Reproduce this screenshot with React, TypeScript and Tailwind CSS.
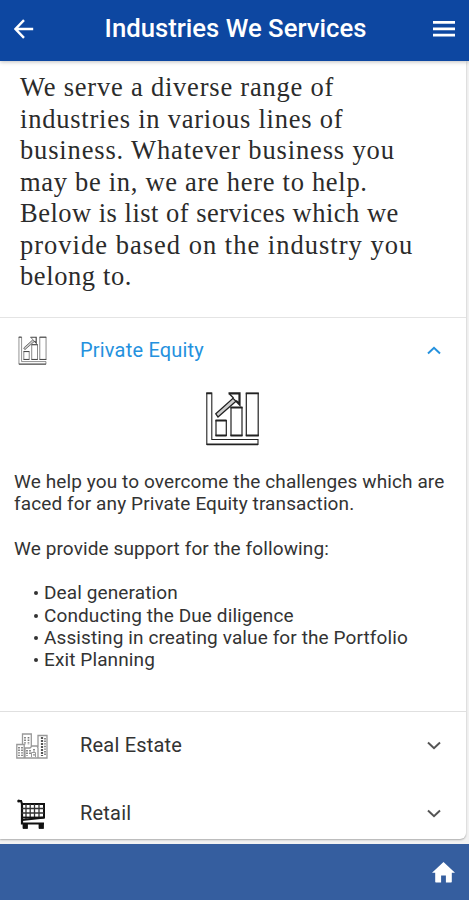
import { ReactNode } from 'react'

const introLines = [
    { text: 'We serve a diverse range of', spacing: 'tracking-[0.79px]' },
    { text: 'industries in various lines of', spacing: 'tracking-[0.77px]' },
    { text: 'business. Whatever business you', spacing: 'tracking-[0.85px]' },
    { text: 'may be in, we are here to help.', spacing: 'tracking-[0.7px]' },
    { text: 'Below is list of services which we', spacing: 'tracking-[0.49px]' },
    { text: 'provide based on the industry you', spacing: 'tracking-[1.01px]' },
    { text: 'belong to.', spacing: 'tracking-[0.6px]' },
];

const supportItems = [
    'Deal generation',
    'Conducting the Due diligence',
    'Assisting in creating value for the Portfolio',
    'Exit Planning',
];

const ChartIcon = ({ className }: { className: string }) => (
    <svg viewBox="0 0 55 55" fill="none" stroke="currentColor" className={className}>
        <path d="M1.8 2h5v46.5H53v5H1.8z" strokeWidth="1.1" />
        <path d="M1.3 2.3h5.5M1.8 53.3H53" strokeWidth="1.8" />
        <path d="M11 29.5h10.3v15H11zM26 16.5h11v28H26zM41.3 2.3h11.9v42.2H41.3z" strokeWidth="1.2" />
        <path d="M10.5 29.5h11M10.5 44.5h11M25.5 16.5h12M25.5 44.5h12M40.8 2.3h13M40.8 44.5h13" strokeWidth="1.8" />
        <path d="M10.8 22.8 28 7.3l3 3L13 26z" fill="#ccc" strokeWidth="1.3" />
        <path d="M23.5 2.3h11v11L31 9.8" strokeWidth="2.2" />
        <path d="m24.5 3 4 4" strokeWidth="1.4" />
    </svg>
);

const BuildingsIcon = () => (
    <svg viewBox="0 0 32 26" fill="none" stroke="#999" className="h-[26px] w-8">
        <path d="M.8 25V11.5h7.4V25zM6.5 11.5V1h8.8v13M22 14V2.5h9V25H.8M9 25V15h5l2-2h5l1 2v10" strokeWidth="1.3" />
        <path d="M3 14v9M6 14v9M9 4v8M12.5 4v8M11 17v6M14 17v4M18 16v7M29 5v18" stroke="#777" strokeWidth="1.7" strokeDasharray="1.4 1.2" />
        <path d="M26 4v19" stroke="#555" strokeWidth="2.2" strokeDasharray="2 1" />
        <path d="M15.5 24v-4.5h4V24" />
    </svg>
);

const CartIcon = () => (
    <svg viewBox="0 0 30 32" fill="none" stroke="#111" className="ml-px h-8 w-[30px]">
        <path d="M1 3h3l1 3v19.5h22" strokeWidth="2.2" />
        <path d="M4.5 6H27v13.5L5 22" strokeWidth="2" />
        <path d="M9 6v15M13.2 6v14.5M17.5 6v14M22 6v13.5M4.5 10.5H27M4.5 15H27" stroke="#333" strokeWidth="1.3" />
        <path d="M6 19.5h21" strokeWidth="1.8" />
        <circle cx="1.8" cy="3" r="1.6" fill="#111" stroke="none" />
        <path d="M6 26h4.5v4.5H6zM22 26h4.5v4.5H22z" fill="#111" strokeWidth=".8" strokeLinejoin="round" />
    </svg>
);

const Chevron = ({ up = false }: { up?: boolean }) => (
    <svg viewBox="0 0 14 9" fill="none" stroke="currentColor" strokeWidth="2" className="h-[9px] w-3.5">
        <path d={up ? 'M1 7.5 7 1.8l6 5.7' : 'M1 1.5l6 5.7 6-5.7'} />
    </svg>
);

interface RowProps {
    icon: ReactNode;
    label: string;
    open?: boolean;
}

const IndustryRow = ({ icon, label, open }: RowProps) => (
    <button className={`flex w-full shrink-0 items-center pr-[25px] pl-4 ${open ? 'h-16 text-[#2491de]' : 'h-[68px] pb-px text-[#333]'}`}>
        <span className="flex w-16 items-center">{icon}</span>
        <span className={`flex-1 text-left text-[20px] leading-6 tracking-[0.2px] ${open ? '' : 'pb-0.5'}`}>{label}</span>
        <span className={open ? '' : 'text-[#555]'}>
            <Chevron up={open} />
        </span>
    </button>
);

const App = () => {
    return (
        <div className="flex h-[900px] w-[469px] flex-col overflow-hidden bg-[#f2f2f2] font-['Roboto',sans-serif]">
            <header className="z-10 flex h-[61px] shrink-0 items-center justify-between bg-[#0d47a1] px-3.5 pb-1 text-white shadow-[0_1px_4px_rgba(0,0,0,0.25)]">
                <svg viewBox="0 0 20 20" fill="none" stroke="currentColor" strokeWidth="2.4" className="h-5 w-5">
                    <path d="M19.2 10H2M10 1.2 1.5 10l8.5 8.8" />
                </svg>
                <h1 className="pb-0.5 pl-1 text-[25.7px] leading-8 font-medium">Industries We Services</h1>
                <svg viewBox="0 0 22 16" fill="currentColor" className="h-4 w-[22px]">
                    <path d="M0 0h22v2.8H0zM0 6.4h22v2.8H0zM0 12.8h22v2.8H0z" />
                </svg>
            </header>

            <main className="mr-[3px] flex h-[778px] shrink-0 flex-col overflow-hidden rounded-br-md bg-white shadow-[0_1px_2px_rgba(0,0,0,0.3)]">
                <section className="h-[257px] shrink-0 border-b border-[#e4e4e4] pt-[11px] pl-5 font-['Liberation_Serif',serif] text-[26.5px] leading-[31.5px] text-[#2b2b2b]">
                    {introLines.map((line) => (
                        <div key={line.text}>
                            <span className={`whitespace-nowrap ${line.spacing}`}>{line.text}</span>
                        </div>
                    ))}
                </section>

                <section className="h-[394px] shrink-0 border-b border-[#e0e0e0]">
                    <IndustryRow open label="Private Equity" icon={<ChartIcon className="ml-0.5 h-[29px] w-[29px] text-[#444]" />} />
                    <ChartIcon className="mt-[9px] ml-[205px] h-[55px] w-[55px] text-[#222]" />
                    <div className="mt-[25px] pl-3.5 text-[19px] leading-[22.25px] tracking-[0.11px] text-[#333]">
                        <p><span className="whitespace-nowrap">We help you to overcome the challenges which are</span></p>
                        <p><span className="whitespace-nowrap">faced for any Private Equity transaction.</span></p>
                        <p className="mt-[22.25px]">We provide support for the following:</p>
                        <ul className="mt-[22.25px] pl-5">
                            {supportItems.map((item) => (
                                <li key={item} className="flex items-center gap-1.5">
                                    <span className="h-1 w-1 rounded-full bg-[#333]" />
                                    <span className="whitespace-nowrap">{item}</span>
                                </li>
                            ))}
                        </ul>
                    </div>
                </section>

                <IndustryRow label="Real Estate" icon={<BuildingsIcon />} />
                <IndustryRow label="Retail" icon={<CartIcon />} />
            </main>

            <footer className="mt-[5px] flex flex-1 items-center justify-end bg-[#355e9f] pr-3.5 text-white">
                <svg viewBox="0 0 23 21" fill="currentColor" className="h-[21px] w-[23px]">
                    <path d="M11.5 0 0 10.8h3.2v9c0 .5.3.7.7.7h5.2v-7h4.8v7h5.2c.4 0 .7-.2.7-.7v-9H23z" />
                </svg>
            </footer>
        </div>
    )
}

export default App
